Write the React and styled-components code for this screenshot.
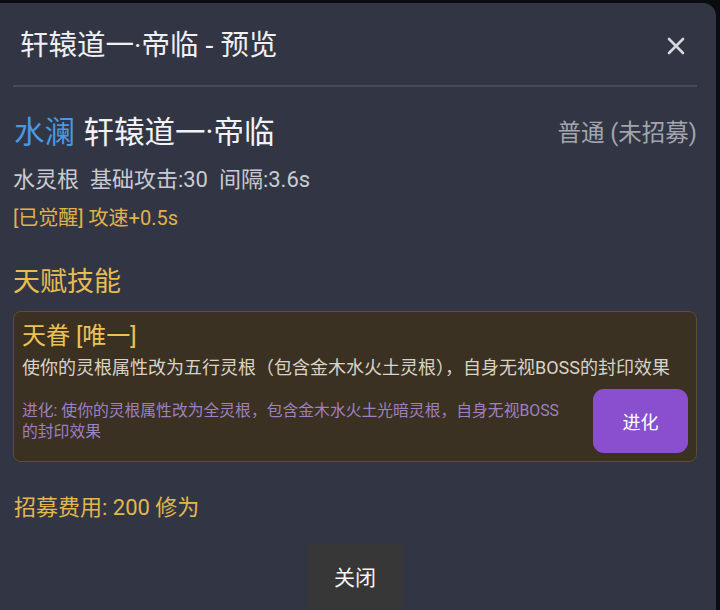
import React from 'react';
import styled, { createGlobalStyle } from 'styled-components';

const GlobalStyle = createGlobalStyle`
  html, body {
    margin: 0;
    padding: 0;
    background: #0b0c10;
    overflow: hidden;
  }
  body {
    font-family: Roboto, "Noto Sans CJK SC", sans-serif;
  }
`;

const Backdrop = styled.div`
  width: 720px;
  height: 610px;
  overflow: hidden;
  background: #0b0c10;
`;

const Modal = styled.div`
  width: 716px;
  height: 640px;
  margin-top: 3px;
  background: #323644;
  border-radius: 0 13px 0 0;
  color: #eceef2;
`;

const Header = styled.div`
  height: 82px;
  box-sizing: border-box;
  padding: 4px 29px 0 20px;
  display: flex;
  align-items: center;
  justify-content: space-between;
`;

const Title = styled.h2`
  margin: 0;
  font-size: 28.5px;
  line-height: 36px;
  font-weight: 400;
  color: #eef0f4;
`;

const CloseX = styled.button`
  border: none;
  background: none;
  padding: 0;
  width: 22px;
  height: 22px;
  display: flex;
  align-items: center;
  justify-content: center;
  cursor: pointer;
`;

const Divider = styled.div`
  height: 2px;
  margin: 0 19px 0 13px;
  background: #454a59;
`;

const Body = styled.div`
  padding: 28px 19px 0 13px;
`;

const NameRow = styled.div`
  display: flex;
  align-items: center;
  justify-content: space-between;
  line-height: 36px;
`;

const Name = styled.div`
  font-size: 30.5px;
  color: #f2f3f6;
  padding-left: 1px;
`;

const Element = styled.span`
  color: #4b98e0;
  margin-right: 1px;
`;

const Rarity = styled.div`
  font-size: 23.5px;
  color: #a3a5ad;
`;

const Stats = styled.div`
  margin-top: 15px;
  font-size: 22px;
  line-height: 28px;
  color: #c9cbd2;
  white-space: pre;
`;

const Awake = styled.div`
  margin-top: 11px;
  font-size: 20px;
  line-height: 26px;
  color: #e0b24a;
`;

const SectionTitle = styled.div`
  margin-top: 34px;
  font-size: 27px;
  line-height: 34px;
  color: #e6bd4e;
`;

const Card = styled.div`
  margin-top: 12px;
  height: 151px;
  box-sizing: border-box;
  padding: 9px 8px 8px 8px;
  background: #3a3123;
  border: 1px solid #5e4e33;
  border-radius: 8px;
`;

const SkillName = styled.div`
  font-size: 24px;
  line-height: 30px;
  color: #ecc252;
`;

const SkillDesc = styled.div`
  margin-top: 5px;
  font-size: 18px;
  line-height: 24px;
  color: #d9d3c6;
  white-space: nowrap;
`;

const EvolveRow = styled.div`
  margin-top: 9px;
  display: flex;
  align-items: center;
  justify-content: space-between;
`;

const EvolveText = styled.div`
  width: 546px;
  font-size: 15.8px;
  line-height: 21px;
  color: #9f80c2;
`;

const EvolveButton = styled.button`
  width: 95px;
  height: 64px;
  border: none;
  border-radius: 11px;
  background: #8a4fcf;
  color: #ffffff;
  font-family: inherit;
  font-size: 18px;
  cursor: pointer;
`;

const Cost = styled.div`
  margin-top: 33px;
  font-size: 22px;
  line-height: 26px;
  color: #e2b84c;
  padding-left: 1px;
`;

const Footer = styled.div`
  margin-top: 22px;
  display: flex;
  justify-content: center;
`;

const CloseButton = styled.button`
  width: 95px;
  height: 66px;
  border: none;
  border-radius: 6px;
  background: #373738;
  color: #f4f4f4;
  font-family: inherit;
  font-size: 21px;
  cursor: pointer;
`;

const App = () => {
  return (
    <Backdrop>
      <GlobalStyle />
      <Modal>
        <Header>
          <Title>轩辕道一·帝临 - 预览</Title>
          <CloseX aria-label="关闭">
            <svg width="18" height="18" viewBox="0 0 18 18">
              <path d="M2 2 L16 16 M16 2 L2 16" stroke="#d6d8de" strokeWidth="2.6" strokeLinecap="round" />
            </svg>
          </CloseX>
        </Header>
        <Divider />
        <Body>
          <NameRow>
            <Name>
              <Element>水澜</Element> 轩辕道一·帝临
            </Name>
            <Rarity>普通 (未招募)</Rarity>
          </NameRow>
          <Stats>水灵根  基础攻击:30  间隔:3.6s</Stats>
          <Awake>[已觉醒] 攻速+0.5s</Awake>
          <SectionTitle>天赋技能</SectionTitle>
          <Card>
            <SkillName>天眷 [唯一]</SkillName>
            <SkillDesc>使你的灵根属性改为五行灵根（包含金木水火土灵根），自身无视BOSS的封印效果</SkillDesc>
            <EvolveRow>
              <EvolveText>进化: 使你的灵根属性改为全灵根，包含金木水火土光暗灵根，自身无视BOSS的封印效果</EvolveText>
              <EvolveButton>进化</EvolveButton>
            </EvolveRow>
          </Card>
          <Cost>招募费用: 200 修为</Cost>
          <Footer>
            <CloseButton>关闭</CloseButton>
          </Footer>
        </Body>
      </Modal>
    </Backdrop>
  );
};

export default App;
